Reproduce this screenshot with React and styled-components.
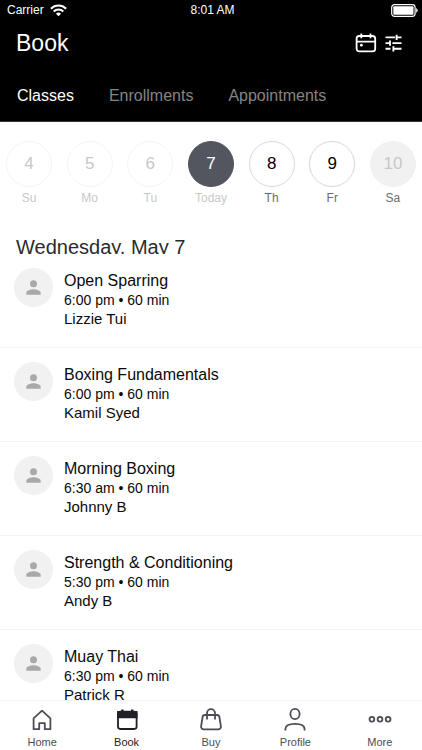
import React, { useState } from 'react';
import styled, { createGlobalStyle } from 'styled-components';

const GlobalStyle = createGlobalStyle`
  * {
    box-sizing: border-box;
  }

  body {
    margin: 0;
    background: #fff;
    color: #0a0a0b;
    font-family: "Liberation Sans", Helvetica, Arial, sans-serif;
  }

  button {
    padding: 0;
    border: 0;
    background: none;
    color: inherit;
    font: inherit;
    cursor: pointer;
  }

  svg {
    display: block;
  }
`;

const Screen = styled.div`
  display: flex;
  flex-direction: column;
  height: 100vh;
`;

const Header = styled.header`
  flex: none;
  background: #000;
  color: #fff;
  border-bottom: 1px solid #333;
`;

const StatusBar = styled.div`
  display: grid;
  grid-template-columns: 1fr auto 1fr;
  align-items: center;
  height: 20px;
  padding: 0 4px 0 7px;
  font-size: 12px;
`;

const Carrier = styled.div`
  display: flex;
  align-items: center;
  gap: 6px;
`;

const Battery = styled.div`
  justify-self: end;
`;

const TitleBar = styled.div`
  display: flex;
  align-items: center;
  justify-content: space-between;
  height: 46px;
  padding: 0 20px 0 16px;
`;

const Title = styled.h1`
  margin: 0;
  font-size: 23px;
  font-weight: 400;
`;

const Actions = styled.div`
  display: flex;
  align-items: center;
  gap: 8px;
`;

const Tabs = styled.nav`
  display: flex;
  align-items: center;
  gap: 35px;
  height: 55px;
  padding: 5px 17px 0;
`;

const Tab = styled.button`
  color: ${props => (props.$active ? '#fff' : '#858585')};
  font-size: 16px;
`;

const Week = styled.div`
  flex: none;
  display: flex;
  justify-content: space-between;
  padding: 19px 6px 0;
`;

const Day = styled.button`
  display: flex;
  flex-direction: column;
  align-items: center;
  gap: 4px;
  width: 46px;
  color: ${props => props.$labelColor};
  font-size: 12px;
  line-height: 14px;
`;

const dayStyles = {
  past: { border: '#f5f5f5', background: '#fff', color: '#c8c8c8', label: '#c8c8c8' },
  today: { border: '#53555f', background: '#53555f', color: '#fff', label: '#c8c8c8' },
  open: { border: '#d8d8d8', background: '#fff', color: '#000', label: '#6c6c6c' },
  empty: { border: '#f1f1f1', background: '#f1f1f1', color: '#c8c8c8', label: '#6c6c6c' },
};

const DayCircle = styled.span`
  display: flex;
  align-items: center;
  justify-content: center;
  width: 46px;
  height: 46px;
  border: 1px solid ${props => props.$look.border};
  border-radius: 50%;
  background: ${props => props.$look.background};
  color: ${props => props.$look.color};
  font-size: 17px;
`;

const DateHeading = styled.h2`
  flex: none;
  height: 20px;
  margin: 29px 16px 0;
  overflow: hidden;
  color: #2b2b2d;
  font-size: 20px;
  font-weight: 400;
  line-height: 26px;
`;

const ClassList = styled.ul`
  flex: 1;
  min-height: 0;
  margin: 0;
  padding: 0;
  overflow-y: auto;
  scrollbar-width: none;
  list-style: none;
`;

const ClassRow = styled.li`
  display: flex;
  gap: 11px;
  height: 94px;
  padding: 14px 14px 0;
  border-bottom: 1px solid #f3f3f3;
`;

const Avatar = styled.div`
  display: flex;
  flex: none;
  align-items: center;
  justify-content: center;
  width: 39px;
  height: 39px;
  border-radius: 50%;
  background: #f1f1f1;
  color: #a9a9a9;
`;

const ClassInfo = styled.div`
  padding-top: 2px;
`;

const ClassName = styled.div`
  font-size: 16px;
  line-height: 21px;
`;

const ClassTime = styled.div`
  font-size: 14px;
  line-height: 19px;
`;

const Teacher = styled.div`
  font-size: 15px;
  line-height: 18px;
`;

const BottomNav = styled.nav`
  flex: none;
  display: grid;
  grid-template-columns: repeat(5, 1fr);
  height: 50px;
  border-top: 1px solid #f3f3f3;
  background: #fff;
`;

const NavLink = styled.a`
  display: flex;
  flex-direction: column;
  align-items: center;
  gap: 5px;
  padding-top: 6px;
  color: ${props => (props.$active ? '#1f2025' : '#4c4d55')};
  font-size: 11px;
  line-height: 13px;
  text-decoration: none;
`;

const WifiIcon = () => (
  <svg width="17" height="13" viewBox="0 0 17 13" fill="none" stroke="currentColor" strokeWidth="2">
    <path d="M0.9 4.7a10.8 10.8 0 0 1 15.2 0" />
    <path d="M3.7 7.5a6.8 6.8 0 0 1 9.6 0" />
    <path d="M8.5 12.3L5.9 9.7a3.7 3.7 0 0 1 5.2 0z" fill="currentColor" stroke="none" />
  </svg>
);

const BatteryIcon = () => (
  <svg width="27" height="13" viewBox="0 0 27 13" fill="none">
    <rect x="0.7" y="0.7" width="23.4" height="11.6" rx="2.8" stroke="currentColor" strokeWidth="1.2" />
    <rect x="2.3" y="2.3" width="20.2" height="8.4" rx="1" fill="currentColor" />
    <path d="M25.2 4.3c1 .4 1.5 1.2 1.5 2.2s-.5 1.8-1.5 2.2z" fill="currentColor" />
  </svg>
);

const CalendarIcon = () => (
  <svg width="22" height="20" viewBox="0 0 22 20" fill="none" stroke="currentColor" strokeWidth="1.8">
    <rect x="1.6" y="3" width="18.6" height="15.4" rx="2.6" />
    <path d="M1.6 8.6h18.6M6.3 0.6v4.6M15.5 0.6v4.6" />
    <circle cx="6.4" cy="12.2" r="1.4" fill="currentColor" stroke="none" />
  </svg>
);

const TuneIcon = () => (
  <svg width="17" height="18" viewBox="0 0 17 18" fill="none" stroke="currentColor" strokeWidth="1.9">
    <path d="M0.5 3.4h9.6M11.6 0.8v5.2M11.6 3.4h4.9" />
    <path d="M0.5 9.1h4.3M5 6.5v5.2M7.4 9.1h9.1" />
    <path d="M0.5 14.8h5M8.4 12.200v5.2M8.4 14.8h8.1" />
  </svg>
);

const PersonIcon = () => (
  <svg width="15" height="15" viewBox="0 0 15 15" fill="currentColor">
    <circle cx="7.5" cy="3.7" r="3.5" />
    <path d="M0.3 14.7v-1.9c0-2.4 4.4-3.6 7.2-3.6s7.2 1.2 7.2 3.6v1.9z" />
  </svg>
);

const navIcons = {
  Home: (
    <path
      d="M3.6 11.3L12 3.6l8.4 7.7v10.9h-5.6v-6.1H9.2v6.1H3.6z"
      strokeLinejoin="round"
    />
  ),
  Book: (
    <>
      <rect x="3" y="4.6" width="18.600" height="17.4" rx="2.4" />
      <path d="M3 5h18.600v5.400H3z" fill="currentColor" />
      <path d="M7.4 2.4v4M17.2 2.4v4" strokeWidth="2.4" />
    </>
  ),
  Buy: (
    <>
      <path d="M6 8h12a2.400 2.400 0 0 1 2.400 2l1.500 9.300a2.600 2.600 0 0 1-2.600 3H4.700a2.600 2.600 0 0 1-2.600-3L3.600 10A2.400 2.400 0 0 1 6 8z" />
      <path d="M8 12.600V6.200a4 4 0 0 1 8 0v6.400" />
    </>
  ),
  Profile: (
    <>
      <ellipse cx="12" cy="7" rx="4.600" ry="5.100" />
      <path d="M2.400 23.400v-1.300c0-3.200 3.600-5.200 9.600-5.200s9.600 2 9.600 5.200v1.300" />
    </>
  ),
  More: (
    <>
      <circle cx="3.900" cy="12.300" r="2.400" />
      <circle cx="12" cy="12.300" r="2.400" />
      <circle cx="20.100" cy="12.300" r="2.400" />
    </>
  ),
};

const NavIcon = ({ name }) => (
  <svg width="24" height="24" viewBox="0 0 24 24" fill="none" stroke="currentColor" strokeWidth="1.8">
    {navIcons[name]}
  </svg>
);

const days = [
  { date: 4, label: 'Su', kind: 'past' },
  { date: 5, label: 'Mo', kind: 'past' },
  { date: 6, label: 'Tu', kind: 'past' },
  { date: 7, label: 'Today', kind: 'today' },
  { date: 8, label: 'Th', kind: 'open' },
  { date: 9, label: 'Fr', kind: 'open' },
  { date: 10, label: 'Sa', kind: 'empty' },
];

const classes = [
  { name: 'Open Sparring', time: '6:00 pm • 60 min', teacher: 'Lizzie Tui' },
  { name: 'Boxing Fundamentals', time: '6:00 pm • 60 min', teacher: 'Kamil Syed' },
  { name: 'Morning Boxing', time: '6:30 am • 60 min', teacher: 'Johnny B' },
  { name: 'Strength & Conditioning', time: '5:30 pm • 60 min', teacher: 'Andy B' },
  { name: 'Muay Thai', time: '6:30 pm • 60 min', teacher: 'Patrick R' },
];

const App = () => {
  const [tab, setTab] = useState('Classes');

  return (
    <Screen>
      <GlobalStyle />
      <Header>
        <StatusBar>
          <Carrier>
            Carrier
            <WifiIcon />
          </Carrier>
          <span>8:01 AM</span>
          <Battery>
            <BatteryIcon />
          </Battery>
        </StatusBar>
        <TitleBar>
          <Title>Book</Title>
          <Actions>
            <button type="button" aria-label="Calendar"><CalendarIcon /></button>
            <button type="button" aria-label="Filters"><TuneIcon /></button>
          </Actions>
        </TitleBar>
        <Tabs>
          {['Classes', 'Enrollments', 'Appointments'].map((name) => (
            <Tab key={name} type="button" $active={tab === name} onClick={() => setTab(name)}>
              {name}
            </Tab>
          ))}
        </Tabs>
      </Header>

      <Week>
        {days.map((day) => (
          <Day key={day.date} type="button" $labelColor={dayStyles[day.kind].label}>
            <DayCircle $look={dayStyles[day.kind]}>{day.date}</DayCircle>
            {day.label}
          </Day>
        ))}
      </Week>

      <DateHeading>Wednesday, May 7</DateHeading>

      <ClassList>
        {classes.map((item) => (
          <ClassRow key={item.name}>
            <Avatar><PersonIcon /></Avatar>
            <ClassInfo>
              <ClassName>{item.name}</ClassName>
              <ClassTime>{item.time}</ClassTime>
              <Teacher>{item.teacher}</Teacher>
            </ClassInfo>
          </ClassRow>
        ))}
      </ClassList>

      <BottomNav>
        {Object.keys(navIcons).map((name) => (
          <NavLink key={name} href={`#${name.toLowerCase()}`} $active={name === 'Book'}>
            <NavIcon name={name} />
            {name}
          </NavLink>
        ))}
      </BottomNav>
    </Screen>
  );
};

export default App;
